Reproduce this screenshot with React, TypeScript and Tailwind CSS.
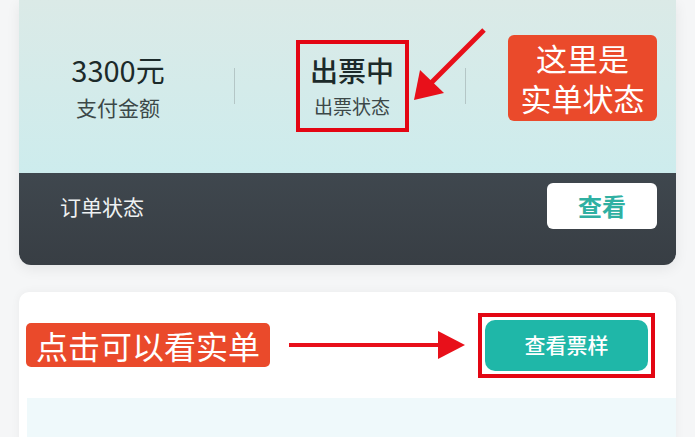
import React from "react";

const font = "font-['Noto_Sans_CJK_SC','Noto_Sans',sans-serif]";

const App: React.FC = () => {
  return (
    <div className={`relative w-[695px] h-[437px] overflow-hidden bg-[#f5f6f7] px-[19px] ${font}`}>
      {/* 订单卡片 */}
      <div className="h-[265px] rounded-b-[12px] overflow-hidden shadow-[0_4px_14px_rgba(0,0,0,0.07)]">
        <div className="h-[173px] bg-gradient-to-b from-[#dbeae7] to-[#cdeced] flex items-center pb-[2px]">
          <div className="w-[198px] flex flex-col items-center">
            <div className="text-[29px] leading-[36px] text-[#1c2a2a]">3300元</div>
            <div className="text-[21px] leading-[28px] mt-[6px] text-[#3c4848]">支付金额</div>
          </div>
          <div className="ml-[17px] w-px h-[36px] bg-[#b4c6c6]" />
          <div className="w-[230px] flex justify-center pl-[4px]">
            <div className="w-[113px] h-[92px] border-4 border-[#e30613] flex flex-col items-center justify-center">
              <div className="text-[28px] leading-[36px] font-medium text-[#1c2a2a]">出票中</div>
              <div className="text-[19px] leading-[28px] mt-[4px] text-[#3c4848]">出票状态</div>
            </div>
          </div>
          <div className="w-px h-[36px] bg-[#b4c6c6]" />
        </div>
        <div className="h-[92px] bg-gradient-to-b from-[#3f474e] to-[#383e44] flex items-center justify-between pl-[41px] pr-[19px] pb-[26px]">
          <div className="text-[21px] leading-[28px] text-[#eef1f2]">订单状态</div>
          <div className="w-[110px] h-[46px] rounded-[6px] bg-white flex items-center justify-center text-[24px] font-bold text-[#2fb0a2]">
            查看
          </div>
        </div>
      </div>

      {/* 票样卡片 */}
      <div className="mt-[27px] h-[160px] bg-white rounded-t-[10px] shadow-[0_0_10px_rgba(0,0,0,0.05)] flex flex-col">
        <div className="h-[106px] flex items-center pl-[7px]">
          <div className="h-[44px] px-[10px] rounded-[5px] bg-[#ea4a2b] text-white text-[32px] leading-[44px]">
            点击可以看实单
          </div>
          <svg className="ml-[19px]" width="176" height="30" viewBox="0 0 176 30">
            <line x1="0" y1="15" x2="152" y2="15" stroke="#e8101a" strokeWidth="4" />
            <polygon points="149,1 176,15 149,29" fill="#e8101a" />
          </svg>
          <div className="ml-[13px] p-[3px] border-4 border-[#e30613]">
            <div className="w-[163px] h-[51px] rounded-[10px] bg-[#1fb7a8] flex items-center justify-center text-white text-[21px] font-medium">
              查看票样
            </div>
          </div>
        </div>
        <div className="flex-1 ml-[8px] bg-[#eff9fb]" />
      </div>

      {/* 标注 */}
      <div className="absolute left-[508px] top-[35px] w-[149px] h-[86px] rounded-[6px] bg-[#ea4a2b] flex flex-col items-center justify-center text-white text-[31px] leading-[40px]">
        <div>这里是</div>
        <div>实单状态</div>
      </div>
      <svg className="absolute left-0 top-0" width="695" height="437" viewBox="0 0 695 437">
        <line x1="484" y1="30" x2="428" y2="86" stroke="#e8101a" strokeWidth="5" />
        <polygon points="414,100 420,70 444,93" fill="#e8101a" />
      </svg>
    </div>
  );
};

export default App;
